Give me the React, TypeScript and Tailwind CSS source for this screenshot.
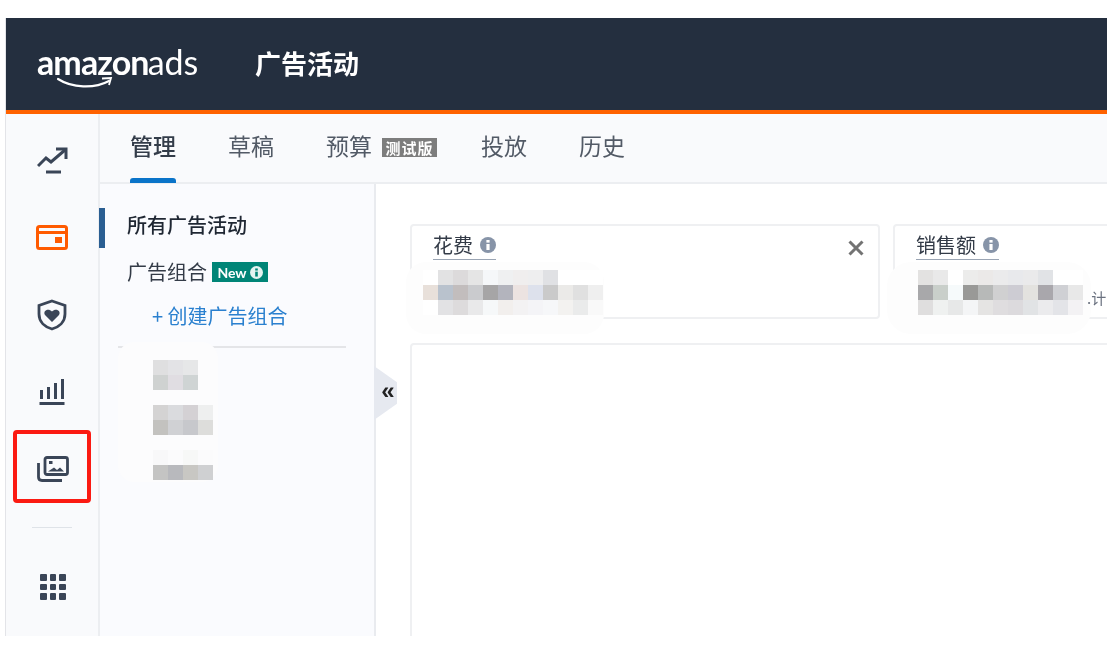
const sidebarMosaics: string[][][] = [
  [
    ["#dfdfe0", "#e3e3e6", "#e6e7e8"],
    ["#cfd2d1", "#e0dde2", "#cfd4d4"],
  ],
  [
    ["#d4d3d3", "#dadbde", "#d4d1d4", "#eeefef"],
    ["#c3c2bf", "#d0d1d4", "#c7c8cc", "#dddddb"],
  ],
  [
    ["#f8f8f9", "#fbfbfc", "#f7f8f7", "#fbfbfc"],
    ["#c4c4c3", "#b8b9bd", "#c8c7c3", "#cfd0d2"],
  ],
];

const spendMosaic: string[][] = [
  ["#ffffff", "#e2e2e3", "#dcdadb", "#e5e5e5", "#f5f7f9", "#eff0f1", "#f0eeee", "#eeeeef", "#e0e1e4", "#ffffff", "#ffffff", "#ffffff"],
  ["#e8e0da", "#b9c2cd", "#c2bdbd", "#cacbce", "#a6a5a6", "#b3b4bd", "#ece3e1", "#dde1ec", "#cacaca", "#ebeae8", "#e0e0e0", "#efefef"],
  ["#ffffff", "#e2e2e4", "#dddbdc", "#e9e9ea", "#f6f8f9", "#f2efed", "#f3f2f3", "#f4f4f7", "#f6f7f9", "#f3f2f0", "#eaebeb", "#f9f9f9"],
];

const salesMosaic: string[][] = [
  ["#e3e2e1", "#e9e9e9", "#ffffff", "#ececeb", "#ebe9e8", "#ebebec", "#e8e9ec", "#eaeaeb", "#e1e3e6", "#ffffff", "#ffffff"],
  ["#a8a8aa", "#c9cfca", "#f6fafb", "#999997", "#b7b9b8", "#d0d0d1", "#cdccd3", "#e3e2df", "#a9a7ac", "#cfd0d4", "#e8e8e8"],
  ["#dfdede", "#eff1f0", "#e7e8e8", "#f4f5f6", "#e5e4e3", "#dfdddf", "#dcdadd", "#e1e3e5", "#ebebed", "#e3e4e8", "#f3f2f4"],
];

function Mosaic({ rows, cell }: { rows: string[][]; cell: string }) {
  return (
    <div className="flex flex-col">
      {rows.map((row, r) => (
        <div key={r} className="flex">
          {row.map((c, i) => (
            <div key={i} className={cell} style={{ backgroundColor: c }} />
          ))}
        </div>
      ))}
    </div>
  );
}

function InfoDot({ className, inner = "#fff" }: { className: string; inner?: string }) {
  return (
    <svg viewBox="0 0 16 16" className={className}>
      <circle cx="8" cy="8" r="8" fill="currentColor" />
      <rect x="6.4" y="7" width="3.2" height="6" fill={inner} />
      <rect x="6.4" y="3" width="3.2" height="2.6" fill={inner} />
    </svg>
  );
}

function RailItem({ children }: { children: React.ReactNode }) {
  return <div className="h-[77px] flex items-center justify-center">{children}</div>;
}

export default function App() {
  return (
    <div className="w-[1107px] h-[647px] overflow-hidden bg-white pt-[18px] pb-[11px] blur-[0.55px] font-['Noto_Sans_CJK_SC','Noto_Sans',sans-serif]">
      <div className="h-full flex flex-col ml-[5px] border-l border-[#e3e4e8]">
        <header className="h-[96px] shrink-0 bg-[#242f3f] border-b-4 border-[#ff6200] flex items-center text-white">
          <div className="relative ml-[31px] w-[165px] h-[60px] font-['Lato',sans-serif] text-[34px] leading-[55px] tracking-[-0.9px] whitespace-nowrap">
            <span className="font-bold">amazon</span>
            <span className="font-normal tracking-[0px] ml-[-1px]">ads</span>
            <svg viewBox="0 0 60 16" className="absolute left-[19px] top-[42px] w-[60px] h-[16px]" fill="none">
              <path d="M2 3 C16 12 38 13 53 5" stroke="#fff" strokeWidth="2.2" strokeLinecap="round" />
              <path d="M46 2.5 L55 2 L53 9" stroke="#fff" strokeWidth="1.8" fill="none" />
            </svg>
          </div>
          <div className="ml-[53px] text-[26px] leading-none font-bold mb-[2px]">广告活动</div>
        </header>

        <div className="flex-1 flex min-h-0">
          <nav className="relative w-[94px] shrink-0 bg-[#f9fafc] border-r-2 border-[#eceef1] pt-[8px] text-[#3a4557]">
            <RailItem>
              <svg viewBox="0 0 32 28" className="w-[32px] h-[28px] translate-x-[1px]" fill="none" stroke="currentColor" strokeWidth="3">
                <path d="M1 19 L9 11 L14 15 L28 3" />
                <path d="M19 2 L29 2 L29 12" />
                <path d="M9 25 L24 25" />
              </svg>
            </RailItem>
            <RailItem>
              <svg viewBox="0 0 32 26" className="w-[32px] h-[26px]" fill="none" stroke="#ff5a00" strokeWidth="3">
                <rect x="1.5" y="1.5" width="29" height="22" rx="2" />
                <path d="M1.5 7.5 L30.5 7.5" />
                <rect x="19" y="12" width="7" height="6" fill="#ff5a00" stroke="none" />
              </svg>
            </RailItem>
            <RailItem>
              <svg viewBox="0 0 32 32" className="w-[32px] h-[32px]" fill="none">
                <path d="M16 2 L29 6.5 L29 15 C29 23 23 28 16 30 C9 28 3 23 3 15 L3 6.5 Z" stroke="currentColor" strokeWidth="2.8" />
                <path d="M16 23 L9 16 C6.5 12 12 8.5 16 12.5 C20 8.5 25.5 12 23 16 Z" fill="currentColor" />
              </svg>
            </RailItem>
            <RailItem>
              <svg viewBox="0 0 26 26" className="w-[26px] h-[26px]" fill="currentColor">
                <rect x="1" y="11" width="3" height="9" />
                <rect x="8" y="8" width="3" height="12" />
                <rect x="15" y="4" width="3" height="16" />
                <rect x="22" y="0" width="3" height="20" />
                <rect x="0.5" y="23" width="25" height="3" />
              </svg>
            </RailItem>
            <RailItem>
              <svg viewBox="0 0 32 26" className="w-[32px] h-[26px] translate-x-[1px]" fill="none" stroke="currentColor" strokeWidth="2.8">
                <rect x="8" y="1.5" width="22.5" height="17" rx="2" />
                <path d="M1.5 7 L1.5 21 C1.5 23.5 3 24.5 5 24.5 L25 24.5" />
                <rect x="12" y="5" width="3.5" height="3" fill="currentColor" stroke="none" />
                <path d="M11 15.5 L17 11.5 L20 14 L23 11.5 L27 15.5 Z" fill="currentColor" stroke="none" />
              </svg>
            </RailItem>
            <div className="absolute left-[7px] top-[316px] w-[78px] h-[73px] border-[4px] border-[#fb1a12] rounded-[4px]" />
            <div className="mx-[26px] mt-[20px] h-px bg-[#dfe3e8]" />
            <div className="mt-[46px] mx-auto w-[26px] grid grid-cols-3 gap-[3px] translate-x-[1px]">
              {Array.from({ length: 9 }).map((_, i) => (
                <div key={i} className="h-[6.5px] bg-[#3a4557] rounded-[1px]" />
              ))}
            </div>
          </nav>

          <main className="flex-1 flex flex-col min-w-0">
            <div className="h-[70px] shrink-0 bg-[#f9fafc] border-b-2 border-[#eceef1] pl-[30px] flex items-start text-[23px] leading-none text-[#525a66]">
              <div className="relative h-[69px] pt-[20px] font-medium text-[#333c49] w-[46px] whitespace-nowrap">
                管理
                <div className="absolute left-0 right-0 bottom-0 h-[5px] bg-[#0a74c9] rounded-t-[3px]" />
              </div>
              <div className="ml-[52px] pt-[20px] whitespace-nowrap">草稿</div>
              <div className="ml-[52px] pt-[20px] whitespace-nowrap">预算</div>
              <div className="ml-[10px] mt-[24px] w-[55px] h-[19px] bg-[#7d7d7d] text-white text-[15px] leading-[19px] text-center font-bold tracking-[1px]">测试版</div>
              <div className="ml-[44px] pt-[20px] whitespace-nowrap">投放</div>
              <div className="ml-[52px] pt-[20px] whitespace-nowrap">历史</div>
            </div>

            <div className="flex-1 flex min-h-0">
              <aside className="relative w-[276px] shrink-0 bg-[#fafbfe] border-r-2 border-[#e9ebef] pl-[27px] pt-[28px]">
                <div className="absolute left-[-1px] top-[24px] w-[6px] h-[40px] bg-[#2a5e92]" />
                <div className="text-[20px] leading-[26px] font-medium text-[#1f2733] whitespace-nowrap">所有广告活动</div>
                <div className="mt-[21px] flex items-center h-[26px]">
                  <span className="text-[20px] leading-[26px] text-[#333b47] whitespace-nowrap">广告组合</span>
                  <span className="ml-[5px] w-[56px] h-[20px] bg-[#008577] text-white flex items-center justify-center gap-[3px] font-['Lato',sans-serif] text-[14px] font-bold">
                    New
                    <InfoDot className="w-[13px] h-[13px] text-[#e4f4f1]" inner="#008577" />
                  </span>
                </div>
                <div className="mt-[18px] ml-[25px] text-[20px] leading-[26px] text-[#2a80cf] whitespace-nowrap">+ 创建广告组合</div>
                <div className="mt-[17px] ml-[-9px] w-[228px] h-[2px] bg-[#e4e5e8]" />
                <div className="absolute left-[18px] top-[158px] w-[100px] h-[140px] rounded-[16px] bg-[#fcfcfd]" />
                <div className="absolute left-[53px] top-[176px] flex flex-col gap-[15px]">
                  {sidebarMosaics.map((m, i) => (
                    <Mosaic key={i} rows={m} cell="w-[15px] h-[15px]" />
                  ))}
                </div>
                <div className="absolute left-[274px] top-[182px] w-[23px] h-[54px] bg-[#e6e9f0] [clip-path:polygon(0_0,100%_30%,100%_70%,0_100%)] flex items-center justify-center text-[#222] text-[24px] font-bold leading-none pb-[4px] pl-[5px] font-['Liberation_Sans',sans-serif] z-10">
                  «
                </div>
              </aside>

              <section className="flex-1 min-w-0 bg-white pl-[34px] pt-[40px] overflow-hidden">
                <div className="flex gap-[13px]">
                  <div className="relative w-[470px] h-[95px] shrink-0 rounded-[4px] border-2 border-[#eff0f2]">
                    <div className="absolute left-[21px] top-[7px] flex items-center gap-[7px] pb-[2px] border-b border-[#9aa5b4] text-[20px] leading-[24px] text-[#333b47]">
                      花费
                      <InfoDot className="w-[16px] h-[16px] text-[#8794a8]" />
                    </div>
                    <svg viewBox="0 0 16 16" className="absolute right-[14px] top-[14px] w-[16px] h-[16px]" stroke="#737373" strokeWidth="3" fill="none">
                      <path d="M1.5 1.5 L14.5 14.5 M14.5 1.5 L1.5 14.5" />
                    </svg>
                    <div className="absolute left-[-6px] top-[36px] w-[198px] h-[72px] rounded-[20px] bg-[#fdfdfd]" />
                    <div className="absolute left-[11px] top-[44px]">
                      <Mosaic rows={spendMosaic} cell="w-[15px] h-[15px]" />
                    </div>
                  </div>
                  <div className="relative w-[300px] h-[95px] shrink-0 rounded-[4px] border-2 border-[#eff0f2]">
                    <div className="absolute left-[21px] top-[7px] flex items-center gap-[7px] pb-[2px] border-b border-[#9aa5b4] text-[20px] leading-[24px] text-[#333b47]">
                      销售额
                      <InfoDot className="w-[16px] h-[16px] text-[#8794a8]" />
                    </div>
                    <div className="absolute left-[-8px] top-[36px] w-[204px] h-[72px] rounded-[24px] bg-[#fdfdfd]" />
                    <div className="absolute left-[23px] top-[44px]">
                      <Mosaic rows={salesMosaic} cell="w-[15px] h-[15px]" />
                    </div>
                    <div className="absolute left-[192px] top-[62px] text-[15px] leading-[20px] text-[#6b7280] whitespace-nowrap">.计</div>
                  </div>
                </div>
                <div className="mt-[24px] w-[800px] h-[400px] rounded-[4px] border-2 border-[#eff0f2]" />
              </section>
            </div>
          </main>
        </div>
      </div>
    </div>
  );
}
